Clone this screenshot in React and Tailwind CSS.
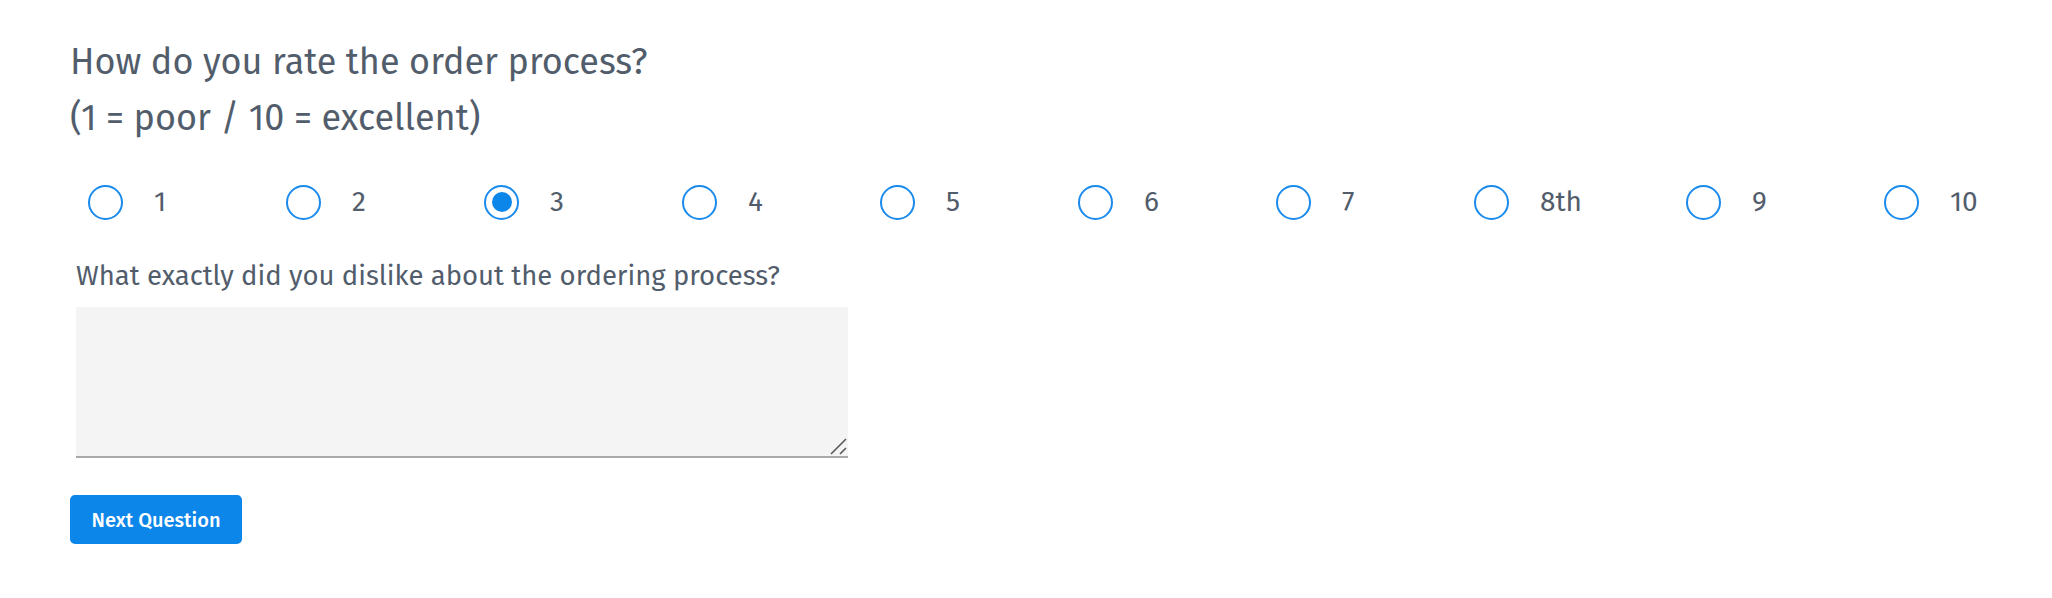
import React, { useState } from "react";

// Rating question with follow-up textarea
const OPTIONS = ["1", "2", "3", "4", "5", "6", "7", "8th", "9", "10"];

function Radio({ label, checked, onSelect, wide }) {
  return (
    <label
      className={`flex items-center cursor-pointer shrink-0 ${wide ? "w-[212px]" : "w-[198px]"}`}
      onClick={onSelect}
    >
      <span className="flex items-center justify-center w-[35px] h-[35px] rounded-full border-2 border-[#1a8bec] bg-white">
        {checked && <span className="w-[20px] h-[20px] rounded-full bg-[#0d86ea]" />}
      </span>
      <span className="ml-[31px] text-[28px] leading-[36px] text-[#525d6c]">{label}</span>
    </label>
  );
}

export default function App() {
  const [rating, setRating] = useState("3");
  const [comment, setComment] = useState("");

  return (
    <div
      className="min-h-screen bg-white pl-[70px] pt-[34px]"
      style={{ fontFamily: '"Fira Sans", Roboto, "Noto Sans", sans-serif' }}
    >
      <h2 className="text-[36px] leading-[56px] text-[#525d6c] font-normal">
        How do you rate the order process?
        <br />
        (1 = poor / 10 = excellent)
      </h2>

      <div className="flex items-center mt-[38px] ml-[18px]">
        {OPTIONS.map((opt) => (
          <Radio
            key={opt}
            label={opt}
            checked={rating === opt}
            wide={opt === "8th"}
            onSelect={() => setRating(opt)}
          />
        ))}
      </div>

      <div className="ml-[6px] mt-[38px]">
        <p className="text-[27.5px] leading-[36px] text-[#525d6c]">
          What exactly did you dislike about the ordering process?
        </p>
        <div className="relative mt-[13px] w-[772px]">
          <textarea
            value={comment}
            onChange={(e) => setComment(e.target.value)}
            className="block w-full h-[151px] resize-none bg-[#f4f4f4] border-0 border-b-2 border-[#a9a9a9] outline-none p-3 text-[20px] text-[#525d6c]"
          />
          {/* resize grip */}
          <svg
            className="absolute right-[1px] bottom-[3px] pointer-events-none"
            width="17"
            height="17"
            viewBox="0 0 17 17"
          >
            <path d="M1 16 L16 1 M10 16 L16 10" stroke="#5a5a5a" strokeWidth="1.6" />
          </svg>
        </div>
      </div>

      <button className="mt-[37px] w-[172px] h-[49px] rounded-[5px] bg-[#0d86ea] text-white text-[20px] font-medium">
        Next Question
      </button>
    </div>
  );
}
